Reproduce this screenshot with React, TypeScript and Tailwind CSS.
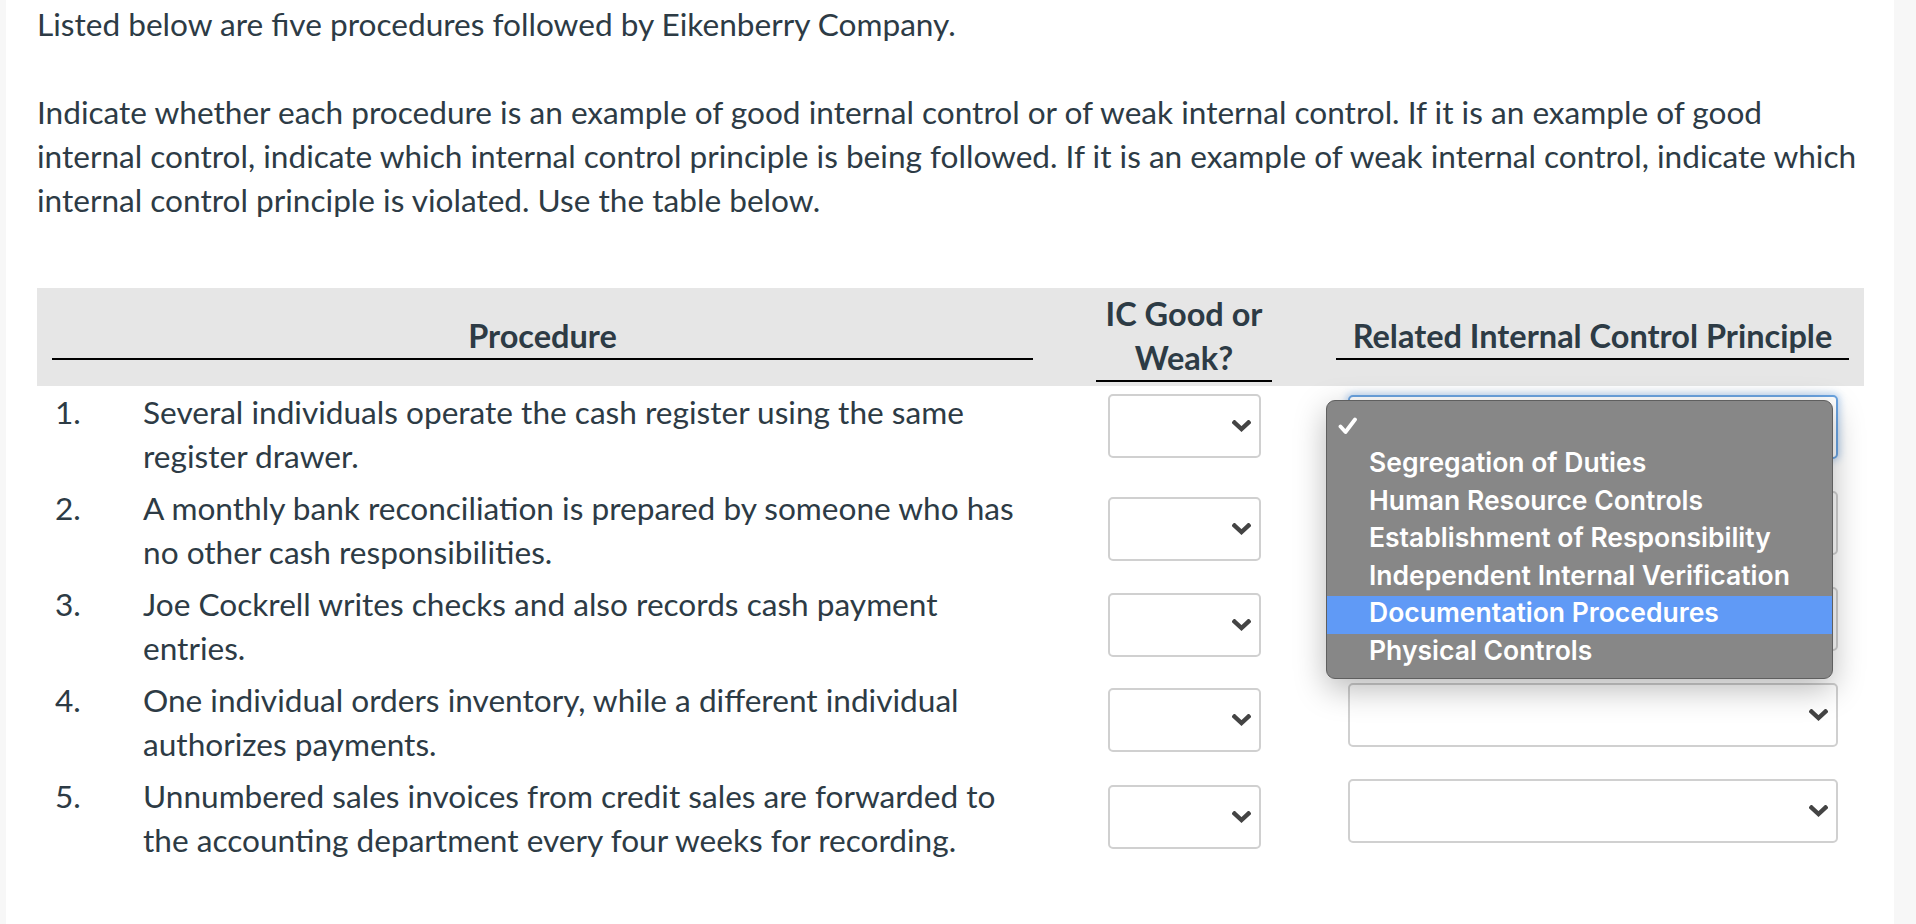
import { type ReactNode } from 'react'

const rows = [
  { n: '1.', text: 'Several individuals operate the cash register using the same register drawer.', icTop: 'mt-[4px]', focused: true },
  { n: '2.', text: 'A monthly bank reconciliation is prepared by someone who has no other cash responsibilities.', icTop: 'mt-[11px]', focused: false },
  { n: '3.', text: 'Joe Cockrell writes checks and also records cash payment entries.', icTop: 'mt-[11px]', focused: false },
  { n: '4.', text: 'One individual orders inventory, while a different individual authorizes payments.', icTop: 'mt-[10px]', focused: false },
  { n: '5.', text: 'Unnumbered sales invoices from credit sales are forwarded to the accounting department every four weeks for recording.', icTop: 'mt-[11px]', focused: false },
]

const options = [
  'Segregation of Duties',
  'Human Resource Controls',
  'Establishment of Responsibility',
  'Independent Internal Verification',
  'Documentation Procedures',
  'Physical Controls',
]

function Chevron() {
  return (
    <svg width="19" height="12" viewBox="0 0 19 12" className="absolute right-[8px] top-1/2 -translate-y-1/2">
      <polyline points="2.5,2.5 9.5,9 16.5,2.5" fill="none" stroke="#444444" strokeWidth="4.4" strokeLinecap="square" />
    </svg>
  )
}

function FakeSelect({ className, focused }: { className: string; focused?: boolean }) {
  return (
    <div
      className={
        'relative h-[64px] rounded-[5px] border-2 bg-white ' +
        (focused ? 'border-[#6aa3e0] shadow-[0_0_7px_2px_rgba(110,165,225,0.45)] ' : 'border-[#d0d0d0] ') +
        className
      }
    >
      <Chevron />
    </div>
  )
}

function HeaderCell({ children }: { children: ReactNode }) {
  return (
    <div className="px-[15px]">
      <div className="border-b-2 border-black text-center text-[32.5px] font-bold leading-[44px]">{children}</div>
    </div>
  )
}

export default function App() {
  return (
    <div className="relative min-h-[924px] bg-[#f7f7f7]" style={{ fontFamily: 'Lato, "Open Sans", sans-serif' }}>
      <div className="ml-[6px] min-h-[924px] w-[1888px] bg-white pl-[31px] pt-[2px] text-[31.6px] leading-[44px] text-[#2d3b45]">
        <p>Listed below are five procedures followed by Eikenberry Company.</p>
        <p className="mt-[44px] w-[1857px]">
          Indicate whether each procedure is an example of good internal control or of weak internal control. If it is an example of good
          <br />
          internal control, indicate which internal control principle is being followed. If it is an example of weak internal control, indicate which
          <br />
          internal control principle is violated. Use the table below.
        </p>

        <div className="mt-[66px] w-[1827px]">
          <div className="grid grid-cols-[1011px_33px_206px_34px_543px] items-center bg-[#e6e6e6] py-[4px]">
            <HeaderCell>Procedure</HeaderCell>
            <div />
            <HeaderCell>
              IC Good or
              <br />
              Weak?
            </HeaderCell>
            <div />
            <HeaderCell>Related Internal Control Principle</HeaderCell>
          </div>

          {rows.map(r => (
            <div key={r.n} className="grid grid-cols-[1011px_33px_206px_34px_543px] items-start py-[4px]">
              <div className="flex">
                <div className="w-[106px] shrink-0 pl-[18px]">{r.n}</div>
                <div className="w-[890px]">{r.text}</div>
              </div>
              <div />
              <div className="flex justify-center">
                <FakeSelect className={'w-[153px] ' + r.icTop} />
              </div>
              <div />
              <div className="flex justify-center">
                <FakeSelect className="mt-[5px] w-[490px]" focused={r.focused} />
              </div>
            </div>
          ))}
        </div>
      </div>

      <div
        className="absolute left-[1326px] top-[400px] w-[507px] rounded-[9px] border border-[#5f5f5f] bg-[#878787] py-[7px] text-[26.5px] font-semibold text-white shadow-[0_10px_32px_rgba(0,0,0,0.28)]"
        style={{ fontFamily: 'Inter, "Noto Sans", sans-serif' }}
      >
        <div className="flex h-[38px] items-center pb-[3px] pl-[11px]">
          <svg width="20" height="20" viewBox="0 0 20 20">
            <polyline points="2.5,10.5 7.5,16 17,3.5" fill="none" stroke="white" strokeWidth="3.8" strokeLinecap="round" strokeLinejoin="round" />
          </svg>
        </div>
        {options.map(o => (
          <div
            key={o}
            className={'flex h-[37.5px] items-center pb-[3px] pl-[42px] ' + (o === 'Documentation Procedures' ? 'bg-[#609af6]' : '')}
          >
            {o}
          </div>
        ))}
      </div>
    </div>
  )
}
